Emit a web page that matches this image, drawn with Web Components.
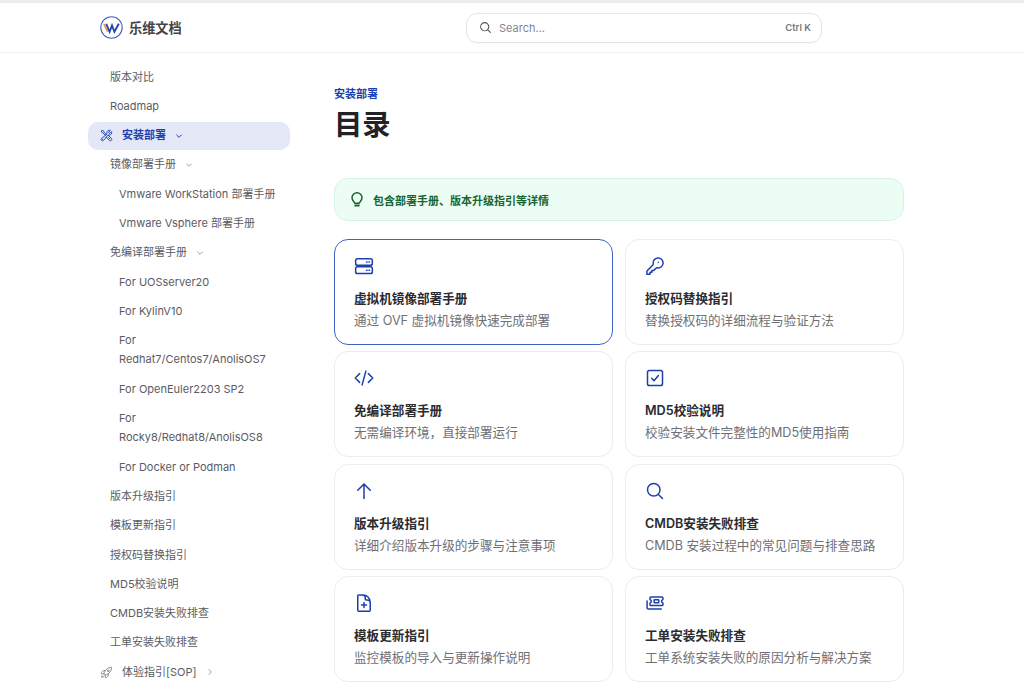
<!DOCTYPE html>
<html lang="zh">
<head>
<meta charset="utf-8">
<title>乐维文档</title>
<style>
  html, body { margin: 0; height: 100%; overflow: hidden; background: #fff; }
  body { font-family: Inter, "Noto Sans CJK SC", sans-serif; }
</style>
</head>
<body>
<docs-app>
  <docs-topbar slot="top"></docs-topbar>
  <docs-sidebar slot="side">
    <nav-item>版本对比</nav-item>
    <nav-item>Roadmap</nav-item>
    <nav-item active chevron="down" icon="wrench">安装部署</nav-item>
    <nav-item chevron="down">镜像部署手册</nav-item>
    <nav-item sub>Vmware WorkStation 部署手册</nav-item>
    <nav-item sub>Vmware Vsphere 部署手册</nav-item>
    <nav-item chevron="down">免编译部署手册</nav-item>
    <nav-item sub>For UOSserver20</nav-item>
    <nav-item sub>For KylinV10</nav-item>
    <nav-item sub>For Redhat7/Centos7/AnolisOS7</nav-item>
    <nav-item sub>For OpenEuler2203 SP2</nav-item>
    <nav-item sub>For Rocky8/Redhat8/AnolisOS8</nav-item>
    <nav-item sub>For Docker or Podman</nav-item>
    <nav-item>版本升级指引</nav-item>
    <nav-item>模板更新指引</nav-item>
    <nav-item>授权码替换指引</nav-item>
    <nav-item>MD5校验说明</nav-item>
    <nav-item>CMDB安装失败排查</nav-item>
    <nav-item>工单安装失败排查</nav-item>
    <nav-item chevron="right" icon="rocket">体验指引[SOP]</nav-item>
  </docs-sidebar>
  <docs-content slot="main">
    <span slot="crumb">安装部署</span>
    <span slot="title">目录</span>
    <tip-note>包含部署手册、版本升级指引等详情</tip-note>
    <doc-card icon="server" hover heading="虚拟机镜像部署手册">通过 OVF 虚拟机镜像快速完成部署</doc-card>
    <doc-card icon="key" heading="授权码替换指引">替换授权码的详细流程与验证方法</doc-card>
    <doc-card icon="code" heading="免编译部署手册">无需编译环境，直接部署运行</doc-card>
    <doc-card icon="check" heading="MD5校验说明">校验安装文件完整性的MD5使用指南</doc-card>
    <doc-card icon="up" heading="版本升级指引">详细介绍版本升级的步骤与注意事项</doc-card>
    <doc-card icon="search" heading="CMDB安装失败排查">CMDB 安装过程中的常见问题与排查思路</doc-card>
    <doc-card icon="fileplus" heading="模板更新指引">监控模板的导入与更新操作说明</doc-card>
    <doc-card icon="ticket" heading="工单安装失败排查">工单系统安装失败的原因分析与解决方案</doc-card>
  </docs-content>
</docs-app>

<script>
const icons = {
  wrench: '<path d="M11.42 15.17 17.25 21A2.652 2.652 0 0 0 21 17.25l-5.877-5.877M11.42 15.17l2.496-3.03c.317-.384.74-.626 1.208-.766M11.42 15.17l-4.655 5.653a2.548 2.548 0 1 1-3.586-3.586l6.837-5.63m5.108-.233c.55-.164 1.163-.188 1.743-.14a4.5 4.5 0 0 0 4.486-6.336l-3.276 3.277a3.004 3.004 0 0 1-2.25-2.25l3.276-3.276a4.5 4.5 0 0 0-6.336 4.486c.091 1.076-.071 2.264-.904 2.95l-.102.085m-1.745 1.437L5.909 7.5H4.5L2.25 3.75l1.5-1.5L7.5 4.5v1.409l4.26 4.26m-1.745 1.437 1.745-1.437m6.615 8.206L15.75 15.75M4.867 19.125h.008v.008h-.008v-.008Z"/>',
  rocket: '<path d="M15.59 14.37a6 6 0 0 1-5.84 7.38v-4.8m5.84-2.58a14.98 14.98 0 0 0 6.16-12.12A14.98 14.98 0 0 0 9.631 8.41m5.96 5.96a14.926 14.926 0 0 1-5.841 2.58m-.119-8.54a6 6 0 0 0-7.381 5.84h4.8m2.581-5.84a14.927 14.927 0 0 0-2.58 5.84m2.699 2.7c-.103.021-.207.041-.311.06a15.09 15.09 0 0 1-2.448-2.448 14.9 14.9 0 0 1 .06-.312m-2.24 2.39a4.493 4.493 0 0 0-1.757 4.306 4.493 4.493 0 0 0 4.306-1.758M16.5 9a1.5 1.5 0 1 1-3 0 1.5 1.5 0 0 1 3 0Z"/>',
  server: '<rect x="2" y="3.2" width="20" height="8" rx="2.2"/><rect x="2" y="13" width="20" height="8" rx="2.2"/><path d="M15 7.2h.6M18 7.2h.6M15 17h.6M18 17h.6"/>',
  key: '<path d="M16 7.6h.01M21.75 8.25a6 6 0 0 1-7.029 5.912c-.563-.097-1.159.026-1.563.43L10.5 17.25H8.25v2.25H6v2.25H2.25v-2.818c0-.597.237-1.17.659-1.591l6.499-6.499c.404-.404.527-1 .43-1.563A6 6 0 1 1 21.75 8.25Z"/>',
  code: '<path d="M17.25 6.75 22.5 12l-5.25 5.25m-10.5 0L1.5 12l5.25-5.25m7.5-3-4.5 16.5"/>',
  check: '<rect x="3" y="3" width="18" height="18" rx="2.2"/><path d="m8 12.4 2.8 2.8L16 9"/>',
  up: '<path d="M12 21V3.5m0 0-7.5 7.5M12 3.5l7.5 7.5"/>',
  search: '<path d="m21 21-5.197-5.197m0 0A7.5 7.5 0 1 0 5.196 5.196a7.5 7.5 0 0 0 10.607 10.607Z"/>',
  fileplus: '<path d="M19.5 14.25v-2.625a3.375 3.375 0 0 0-3.375-3.375h-1.5A1.125 1.125 0 0 1 13.5 7.125v-1.5a3.375 3.375 0 0 0-3.375-3.375H8.25m3.75 9v6m3-3H9m1.5-12H5.625c-.621 0-1.125.504-1.125 1.125v17.25c0 .621.504 1.125 1.125 1.125h12.75c.621 0 1.125-.504 1.125-1.125V11.25a9 9 0 0 0-9-9Z"/>',
  ticket: '<path d="M6 6.5V5.8c0-.6.5-1.1 1.1-1.1h13.3c.6 0 1.1.5 1.1 1.1v1.9a2.3 2.3 0 0 0 0 4.4v1.9c0 .6-.5 1.1-1.1 1.1H7.1c-.6 0-1.100-.5-1.100-1.100v-1.900a2.300 2.300 0 0 0 0-4.400z"/><rect x="11" y="8" width="5.500" height="3.800" rx=".6"/><path d="M2.500 9.500v8.200c0 .9.700 1.600 1.600 1.600h15.400"/>'
};

function svg(name, size, width) {
  return `<svg width="${size}" height="${size}" viewBox="0 0 24 24" fill="none" stroke="currentColor" stroke-width="${width}" stroke-linecap="round" stroke-linejoin="round">${icons[name]}</svg>`;
}

class DocsApp extends HTMLElement {
  constructor() {
    super();
    this.attachShadow({mode: 'open'}).innerHTML = `
      <style>
        :host { display: block; height: 100vh; overflow: hidden; border-top: 3px solid #ececee; box-sizing: border-box; }
        .body { display: flex; padding-left: 88px; gap: 44px; }
      </style>
      <slot name="top"></slot>
      <div class="body"><slot name="side"></slot><slot name="main"></slot></div>`;
  }
}

class DocsTopbar extends HTMLElement {
  constructor() {
    super();
    this.attachShadow({mode: 'open'}).innerHTML = `
      <style>
        :host { display: flex; align-items: center; height: 50px; box-sizing: border-box; border-bottom: 1px solid #f3f3f5; padding: 0 202px 0 100px; font-family: Inter, "Noto Sans CJK SC", sans-serif; }
        .logo { display: flex; align-items: center; gap: 6px; width: 366px; font-size: 13.200px; font-weight: 700; color: #444; }
        .search { flex: 1; height: 30px; box-sizing: border-box; border: 1px solid #e6e6ea; border-radius: 11px; display: flex; align-items: center; padding: 0 10px 0 12px; gap: 7px; font-size: 11px; color: #85858d; box-shadow: 0 1px 2px rgba(0,0,0,.03); }
        .search svg { color: #55555c; }
        .search span { flex: 1; }
        kbd { font: 600 9.500px Inter, sans-serif; color: #77777f; }
      </style>
      <div class="logo">
        <svg width="23" height="23" viewBox="0 0 23 23" fill="none">
          <circle cx="11.500" cy="11.500" r="10.700" stroke="#3f67c9" stroke-width="1.100"/>
          <path d="M3.800 7.800 7.600 15.800" stroke="#ee8a3a" stroke-width="1.500"/>
          <path d="M6.200 7.800 9.600 15.800 12 9.500 14.400 15.800 18.800 7.800" stroke="#2347ad" stroke-width="1.900"/>
        </svg>
        <span>乐维文档</span>
      </div>
      <div class="search">
        <svg width="13" height="13" viewBox="0 0 24 24" fill="none" stroke="currentColor" stroke-width="2" stroke-linecap="round">${icons.search}</svg>
        <span>Search...</span>
        <kbd>Ctrl K</kbd>
      </div>`;
  }
}

class DocsSidebar extends HTMLElement {
  constructor() {
    super();
    this.attachShadow({mode: 'open'}).innerHTML = `
      <style>
        :host { display: flex; flex-direction: column; gap: 1px; width: 202px; flex: none; padding-top: 10px; }
      </style>
      <slot></slot>`;
  }
}

class NavItem extends HTMLElement {
  constructor() {
    super();
    const active = this.hasAttribute('active');
    const sub = this.hasAttribute('sub');
    const icon = this.getAttribute('icon');
    const chevron = this.getAttribute('chevron');
    const chev = chevron ? `<svg class="chev" width="8" height="8" viewBox="0 0 24 24" fill="none" stroke="currentColor" stroke-width="3" stroke-linecap="round" stroke-linejoin="round"><path d="${chevron == 'down' ? 'm5 9 7 7 7-7' : 'm9 5 7 7-7 7'}"/></svg>` : '';
    this.attachShadow({mode: 'open'}).innerHTML = `
      <style>
        :host { display: block; font-family: Inter, "Noto Sans CJK SC", sans-serif; }
        .row { display: flex; align-items: center; gap: 9px; box-sizing: border-box; min-height: 28.300px; padding: 4.500px 10px 4.500px ${sub ? 31 : icon ? 12 : 22}px; border-radius: 10px; font-size: 11px; line-height: 19.300px; color: ${active ? '#1c3faf' : '#5b5b63'}; background: ${active ? '#e4e8f6' : 'none'}; font-weight: ${active ? 600 : 400}; }
        .icon { display: flex; flex: none; color: ${active ? '#1c3faf' : '#8a8a92'}; }
        .chev { flex: none; color: ${active ? '#1c3faf' : '#a0a0a8'}; }
      </style>
      <div class="row">
        ${icon ? `<span class="icon">${svg(icon, 13, 1.7)}</span>` : ''}
        <span><slot></slot></span>
        ${chev}
      </div>`;
  }
}

class DocsContent extends HTMLElement {
  constructor() {
    super();
    this.attachShadow({mode: 'open'}).innerHTML = `
      <style>
        :host { display: block; width: 570px; flex: none; padding-top: 34px; font-family: Inter, "Noto Sans CJK SC", sans-serif; }
        .crumb { font-size: 11px; line-height: 14px; font-weight: 600; color: #1c3faf; }
        h1 { margin: 5px 0 0; font-size: 28.350px; line-height: 38px; font-weight: 700; color: #222226; }
        .grid { display: grid; grid-template-columns: 1fr 1fr; column-gap: 12px; row-gap: 6.300px; margin-top: 18px; }
        ::slotted(tip-note) { grid-column: 1 / -1; margin-top: 16px; margin-bottom: 11.700px; }
      </style>
      <div class="crumb"><slot name="crumb"></slot></div>
      <h1><slot name="title"></slot></h1>
      <div class="grid"><slot></slot></div>`;
  }
}

class TipNote extends HTMLElement {
  constructor() {
    super();
    this.attachShadow({mode: 'open'}).innerHTML = `
      <style>
        :host { display: flex; align-items: center; gap: 9px; height: 43px; box-sizing: border-box; padding: 0 15px; border: 1px solid #d5f5e3; border-radius: 14px; background: #ecfdf3; color: #166534; font-size: 11px; font-weight: 600; }
        svg { flex: none; }
      </style>
      <svg width="14" height="16" viewBox="0 0 14 16" fill="none" stroke="currentColor" stroke-width="1.500" stroke-linecap="round" stroke-linejoin="round">
        <path d="M4.800 11.200C4.500 9.800 2 8.700 2 5.800a5 5 0 0 1 10 0c0 2.900-2.500 4-2.800 5.400z"/>
        <path d="M5.200 13.500h3.600" stroke-width="2"/>
      </svg>
      <span><slot></slot></span>`;
  }
}

class DocCard extends HTMLElement {
  constructor() {
    super();
    const hover = this.hasAttribute('hover');
    this.attachShadow({mode: 'open'}).innerHTML = `
      <style>
        :host { display: block; height: 106px; box-sizing: border-box; padding: 16px 20px 0 19px; border: 1px solid ${hover ? '#3f63c5' : '#ececef'}; border-radius: 14px; background: #fff; font-family: Inter, "Noto Sans CJK SC", sans-serif; }
        .icon { height: 20px; color: #1c3faf; display: flex; align-items: center; }
        h3 { margin: 12px 0 0; font-size: 12.600px; line-height: 22px; font-weight: 600; color: #2b2b30; }
        p { margin: 0; font-size: 12.600px; line-height: 22px; color: #6f6f76; }
      </style>
      <div class="icon">${svg(this.getAttribute('icon'), 20, 1.800)}</div>
      <h3>${this.getAttribute('heading')}</h3>
      <p><slot></slot></p>`;
  }
}

customElements.define('docs-app', DocsApp);
customElements.define('docs-topbar', DocsTopbar);
customElements.define('docs-sidebar', DocsSidebar);
customElements.define('nav-item', NavItem);
customElements.define('docs-content', DocsContent);
customElements.define('tip-note', TipNote);
customElements.define('doc-card', DocCard);
</script>
</body>
</html>
